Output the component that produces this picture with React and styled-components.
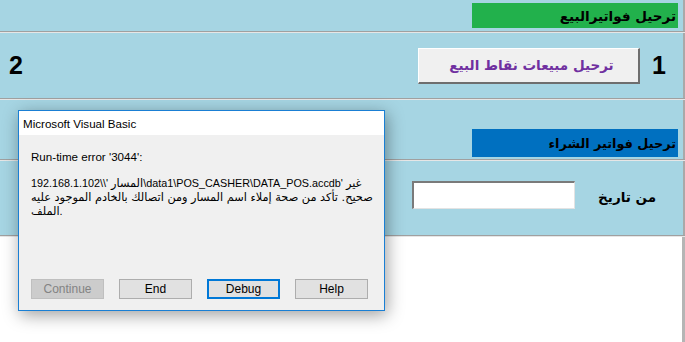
import React from "react";
import styled, { createGlobalStyle } from "styled-components";

const Global = createGlobalStyle`
  html, body { margin: 0; padding: 0; background: #ffffff; }
  body { width: 685px; height: 342px; overflow: hidden; font-family: "Liberation Sans", "DejaVu Sans", sans-serif; }
`;

const Page = styled.div`
  position: relative;
  width: 685px;
  height: 342px;
  display: flex;
  flex-direction: column;
  background: #ffffff;
`;

const Section = styled.div`
  box-sizing: border-box;
  width: 685px;
  height: ${(p) => p.$h}px;
  background: #a6d5e3;
  border-right: 2px solid #a9a9a9;
  display: flex;
  align-items: ${(p) => p.$align || "center"};
  padding: ${(p) => p.$pad || "0"};
`;

const Separator = styled.div`
  width: 685px;
  height: 2px;
  box-sizing: border-box;
  border-top: 1px solid #a0a0a0;
  border-bottom: 1px solid #e6e6e6;
  background: #c8c8c8;
`;

const Header = styled.div`
  margin-left: auto;
  width: 206px;
  height: ${(p) => p.$h}px;
  background: ${(p) => p.$bg};
  direction: rtl;
  display: flex;
  align-items: center;
  padding-right: 2px;
  box-sizing: border-box;
  font-family: "DejaVu Sans", sans-serif;
  font-weight: bold;
  font-size: ${(p) => p.$fs || 13}px;
  color: #000;
`;

const Num = styled.div`
  font-family: "Liberation Sans", sans-serif;
  font-weight: bold;
  font-size: 25px;
  color: #000;
  width: 14px;
`;

const PostButton = styled.div`
  box-sizing: border-box;
  width: 222px;
  height: 36px;
  margin-left: auto;
  margin-right: 12px;
  background: #f0f0f0;
  border-top: 1px solid #ffffff;
  border-left: 1px solid #ffffff;
  border-right: 2px solid #6e6e6e;
  border-bottom: 2px solid #6e6e6e;
  display: flex;
  align-items: center;
  justify-content: center;
  padding-left: 6px;
  direction: rtl;
  font-family: "DejaVu Sans", sans-serif;
  font-weight: bold;
  font-size: 13.5px;
  color: #7030a0;
`;

const DateInput = styled.div`
  box-sizing: border-box;
  width: 163px;
  height: 28px;
  margin-left: auto;
  background: #ffffff;
  border-top: 2px solid #7a7a7a;
  border-left: 2px solid #7a7a7a;
  border-right: 1px solid #e3e3e3;
  border-bottom: 1px solid #e3e3e3;
`;

const Label = styled.div`
  width: 58px;
  margin-left: 23px;
  margin-right: 27px;
  margin-top: 8px;
  direction: rtl;
  font-family: "DejaVu Sans", sans-serif;
  font-weight: bold;
  font-size: 13.5px;
  color: #000;
  white-space: nowrap;
`;

const WhiteArea = styled.div`
  flex: 1;
  width: 685px;
  box-sizing: border-box;
  background: #ffffff;
  border-right: 3px solid #b5b5b5;
`;

const Dialog = styled.div`
  position: absolute;
  left: 18px;
  top: 110px;
  width: 367px;
  height: 201px;
  box-sizing: border-box;
  border: 1px solid #1a7fd4;
  background: #f0f0f0;
  box-shadow: 2px 4px 16px rgba(0, 0, 0, 0.38);
  display: flex;
  flex-direction: column;
  font-family: "Liberation Sans", "DejaVu Sans", sans-serif;
  font-size: 12px;
  color: #000;
`;

const TitleBar = styled.div`
  height: 24px;
  background: #ffffff;
  display: flex;
  align-items: center;
  padding-left: 4px;
  padding-top: 1px;
  box-sizing: border-box;
  font-size: 11.6px;
`;

const DialogBody = styled.div`
  flex: 1;
  padding: 15px 12px 0 12px;
`;

const Line = styled.div`
  direction: ltr;
  white-space: nowrap;
  line-height: 14px;
  height: 14px;
  font-size: ${(p) => p.$fs || 10.8}px;
  margin-bottom: ${(p) => p.$mb || 0}px;
`;

const Ar = styled.span`
  font-family: "DejaVu Sans", sans-serif;
  font-size: 11.3px;
`;

const ButtonRow = styled.div`
  display: flex;
  gap: 15px;
  padding: 0 0 11px 12px;
`;

const DlgButton = styled.div`
  box-sizing: border-box;
  width: 73px;
  height: 20px;
  background: ${(p) => (p.$disabled ? "#cccccc" : "#e1e1e1")};
  border: ${(p) =>
    p.$default ? "2px solid #0078d7" : p.$disabled ? "1px solid #bfbfbf" : "1px solid #adadad"};
  color: ${(p) => (p.$disabled ? "#838383" : "#000")};
  display: flex;
  align-items: center;
  justify-content: center;
  font-size: 12px;
`;

export default function App() {
  return (
    <>
      <Global />
      <Page>
        <Section $h={31} $align="flex-start" $pad="3px 5px 0 0">
          <Header $h={25} $bg="#22b14c" $fs={13.5}>ترحيل فواتيرالبيع</Header>
        </Section>
        <Separator />
        <Section $h={65} $pad="0 17px 0 9px">
          <Num>2</Num>
          <PostButton>ترحيل مبيعات نقاط البيع</PostButton>
          <Num>1</Num>
        </Section>
        <Separator />
        <Section $h={59} $align="flex-start" $pad="29px 5px 0 0">
          <Header $h={28} $bg="#0070c0" $fs={12.8}>ترحيل فواتير الشراء</Header>
        </Section>
        <Separator />
        <Section $h={74} $align="flex-start" $pad="20px 0 0 0">
          <DateInput />
          <Label>من تاريخ</Label>
        </Section>
        <Separator />
        <WhiteArea />

        <Dialog>
          <TitleBar>Microsoft Visual Basic</TitleBar>
          <DialogBody>
            <Line $mb={12} $fs={11.6}>Run-time error '3044':</Line>
            <Line>
              192.168.1.102\\' <Ar>المسار</Ar>\data1\POS_CASHER\DATA_POS.accdb' <Ar>غير</Ar>
            </Line>
            <Line>
              <Ar>صحيح. تأكد من صحة إملاء اسم المسار ومن اتصالك بالخادم الموجود عليه</Ar>
            </Line>
            <Line>
              <Ar>الملف</Ar>.
            </Line>
          </DialogBody>
          <ButtonRow>
            <DlgButton $disabled>Continue</DlgButton>
            <DlgButton>End</DlgButton>
            <DlgButton $default>Debug</DlgButton>
            <DlgButton>Help</DlgButton>
          </ButtonRow>
        </Dialog>
      </Page>
    </>
  );
}
